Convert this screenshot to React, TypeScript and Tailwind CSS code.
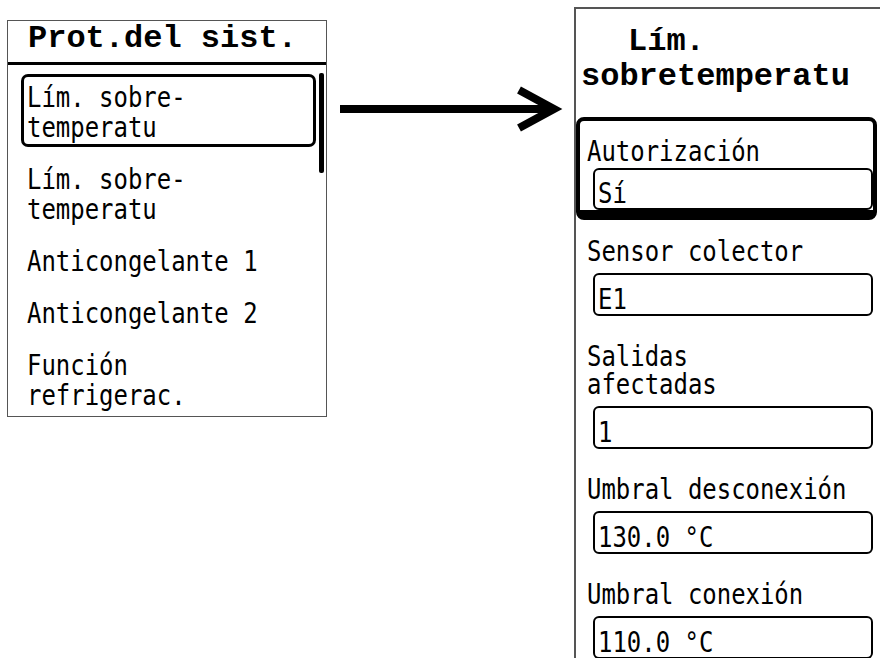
import type { ReactNode } from "react";

// pantalla del regulador: menú "Prot.del sist." y detalle de la función seleccionada

const ITEMS: { id: string; lineas: string[]; sel?: boolean }[] = [
  { id: "lim1", lineas: ["Lím. sobre-", "temperatu"], sel: true },
  { id: "lim2", lineas: ["Lím. sobre-", "temperatu"] },
  { id: "ac1", lineas: ["Anticongelante 1"] },
  { id: "ac2", lineas: ["Anticongelante 2"] },
  { id: "ref", lineas: ["Función", "refrigerac."] },
];

const CAMPOS: { id: string; etiqueta: string[]; valor: string }[] = [
  { id: "sensor", etiqueta: ["Sensor colector"], valor: "E1" },
  { id: "salidas", etiqueta: ["Salidas", "afectadas"], valor: "1" },
  { id: "desc", etiqueta: ["Umbral desconexión"], valor: "130.0 °C" },
  { id: "con", etiqueta: ["Umbral conexión"], valor: "110.0 °C" },
];

function Px({ children }: { children: ReactNode }) {
  return <span className="inline-block origin-left scale-x-[0.855] whitespace-pre">{children}</span>;
}

function Valor({ texto }: { texto: string }) {
  return (
    <div className="ml-[13px] h-[43px] rounded-[6px] border-2 border-black pl-[3px] pt-[11px] leading-[28px]">
      <Px>{texto}</Px>
    </div>
  );
}

export default function App() {
  return (
    <div className="flex h-[658px] w-[880px] items-start overflow-hidden bg-white text-black">
      {/* menú izquierdo */}
      <div className="relative ml-[7px] mt-[20px] h-[397px] w-[320px] shrink-0 border border-[#555]">
        <div className="h-[41px] pl-[20px] font-['Liberation_Mono',monospace] text-[32px] font-bold leading-[35px] whitespace-pre">
          Prot.del sist.
        </div>
        <div className="h-[3px] bg-black" />
        <div className="mt-[9px] flex flex-col gap-[9px] pl-[13px] pr-[10px] font-['DejaVu_Sans_Mono',monospace] text-[28px]">
          {ITEMS.map((it) => (
            <div
              key={it.id}
              className={`rounded-[7px] border-[3px] pb-[1px] pl-[3px] pt-[6px] ${it.sel ? "border-black" : "border-transparent"}`}
            >
              {it.lineas.map((l) => (
                <div key={l} className="h-[30px] leading-[30px]">
                  <Px>{l}</Px>
                </div>
              ))}
            </div>
          ))}
        </div>
        <div className="absolute left-[311px] top-[52px] h-[100px] w-[5px] rounded-[2px] bg-black" />
      </div>

      {/* flecha */}
      <svg className="mt-[80px] h-[60px] w-[247px] shrink-0" viewBox="0 0 247 60">
        <line x1="13" y1="29" x2="226" y2="29" stroke="black" strokeWidth="8" />
        <polyline points="192,10 227,29 192,48" fill="none" stroke="black" strokeWidth="8" strokeLinejoin="miter" />
      </svg>

      {/* detalle */}
      <div className="mt-[7px] h-[651px] w-[306px] min-w-0 shrink-0 border-l-2 border-t-2 border-[#555]">
        <div className="pt-[15px] font-['Liberation_Mono',monospace] text-[32px] font-bold leading-[35px] whitespace-pre">
          <div className="pl-[52px]">Lím.</div>
          <div className="pl-[5px]">sobretemperatu</div>
        </div>
        <div className="font-['DejaVu_Sans_Mono',monospace] text-[28px]">
          <div className="mr-[3px] mt-[23px] rounded-[8px] border-4 border-b-[10px] border-black pt-[17px]">
            <div className="h-[28px] pl-[7px] leading-[28px]">
              <Px>Autorización</Px>
            </div>
            <div className="mt-[2px] ml-[13px] h-[42px] rounded-[6px] border-2 border-black pl-[3px] pt-[10px] leading-[28px]">
              <Px>Sí</Px>
            </div>
          </div>
          <div className="mt-[18px] flex flex-col gap-[27px]">
            {CAMPOS.map((c) => (
              <div key={c.id} className="mr-[3px] border-x-4 border-transparent">
                {c.etiqueta.map((l) => (
                  <div key={l} className="h-[28px] pl-[7px] leading-[28px]">
                    <Px>{l}</Px>
                  </div>
                ))}
                <div className="mt-[7px]">
                  <Valor texto={c.valor} />
                </div>
              </div>
            ))}
          </div>
        </div>
      </div>
    </div>
  );
}
